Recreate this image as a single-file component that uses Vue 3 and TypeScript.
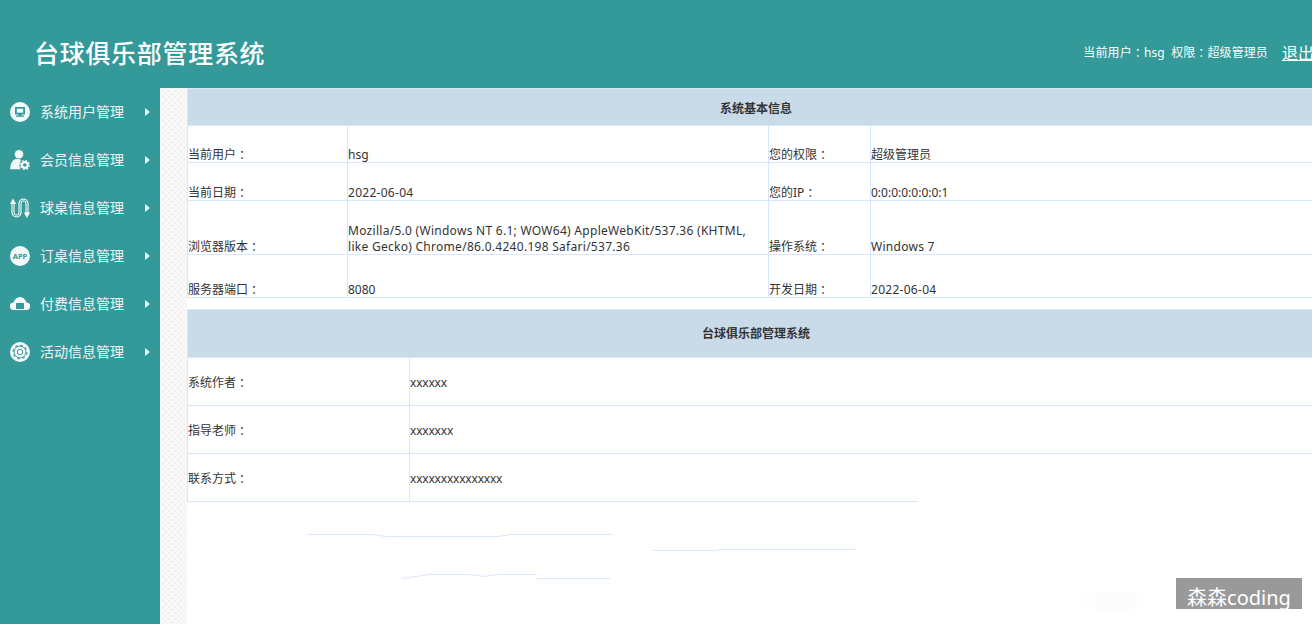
<template>
  <div class="page">
    <header class="top">
      <h1 class="title">台球俱乐部管理系统</h1>
      <div class="user-info">
        <span class="who">当前用户<span class="colon">：</span>hsg&nbsp;&nbsp;权限<span class="colon">：</span>超级管理员</span>
        <a class="logout">退出</a>
      </div>
    </header>
    <div class="body">
      <aside class="side">
        <div v-for="item in menus" :key="item.label" class="menu-item">
          <span class="menu-icon">
            <svg v-if="item.icon === 'screen'" viewBox="0 0 20 20" width="20" height="20">
              <circle cx="10" cy="10" r="10" fill="#f4f8f8" />
              <path d="M5 5h10v7.500H5z" fill="#339999" />
              <path d="M6.800 6.700h6.400v4H6.800z" fill="#f4f8f8" />
              <path d="M8.500 12h3v1.500h2.500v1.300H6v-1.300h2.500z" fill="#339999" />
            </svg>
            <svg v-else-if="item.icon === 'user'" viewBox="0 0 20 20" width="20" height="20">
              <circle cx="9" cy="4.300" r="4.300" fill="#f4f8f8" />
              <path d="M0 19.300c.4-5 2.200-9 4.500-9.800 2-.6 5-.6 7 .4-1.900 2-2.700 6-1 9.400z" fill="#f4f8f8" />
              <circle cx="14.800" cy="15" r="2.900" fill="none" stroke="#f4f8f8" stroke-width="2.200" />
              <circle cx="14.800" cy="15" r="4.400" fill="none" stroke="#f4f8f8" stroke-width="1.300" stroke-dasharray="1.800 1.650" />
            </svg>
            <svg v-else-if="item.icon === 'arrows'" viewBox="0 0 20 20" width="20" height="20">
              <path d="M3 4v10.500a3.500 3.500 0 0 0 7 0V5.500a3.500 3.500 0 0 1 7 0V16" fill="none" stroke="#f4f8f8" stroke-width="3.200" />
              <path d="M3 6v8.500a3.500 3.500 0 0 0 7 0V5.500a3.500 3.500 0 0 1 7 0V14" fill="none" stroke="#339999" stroke-width="0.900" />
              <path d="M-.2 6L3 .5 6.200 6zM13.800 14.500h6.400L17 20z" fill="#f4f8f8" />
            </svg>
            <svg v-else-if="item.icon === 'app'" viewBox="0 0 20 20" width="20" height="20">
              <circle cx="10" cy="10" r="10" fill="#f4f8f8" />
              <text x="10" y="12.700" text-anchor="middle" class="app-text">APP</text>
            </svg>
            <svg v-else-if="item.icon === 'cloud'" viewBox="0 0 20 20" width="20" height="20">
              <path d="M3.800 16a3.800 3.800 0 0 1-.4-7.600C4.600 5.200 7.200 3 10 3s5.400 2.200 6.600 5.400a3.800 3.800 0 0 1-.4 7.600z" fill="#f4f8f8" />
              <path d="M6 9h8v6H6z" fill="#339999" />
            </svg>
            <svg v-else viewBox="0 0 20 20" width="20" height="20">
              <circle cx="10" cy="10" r="10" fill="#f4f8f8" />
              <circle cx="10" cy="10" r="5.900" fill="none" stroke="#339999" stroke-width="0.900" />
              <circle cx="10" cy="10" r="6.800" fill="none" stroke="#339999" stroke-width="1.100" stroke-dasharray="2.700 2.640" />
              <circle cx="10" cy="10" r="2.700" fill="none" stroke="#339999" stroke-width="1" />
            </svg>
          </span>
          <span class="menu-label">{{ item.label }}</span>
          <span class="menu-arrow"></span>
        </div>
      </aside>
      <main class="main">
        <div class="content">
          <table class="info-table">
            <colgroup>
              <col style="width: 160px" />
              <col style="width: 421px" />
              <col style="width: 102px" />
              <col />
            </colgroup>
            <tbody>
              <tr class="head-row first"><th colspan="4">系统基本信息</th></tr>
              <tr v-for="row in infoRows" :key="row.a" :style="{ height: row.h + 'px' }">
                <td><div class="cell">{{ row.a }}<span class="colon">：</span></div></td>
                <td><div class="cell" :class="{ wide: row.wideB }">{{ row.b }}</div></td>
                <td><div class="cell">{{ row.c }}<span class="colon">：</span></div></td>
                <td><div class="cell" :class="{ wide: row.wideD }">{{ row.d }}</div></td>
              </tr>
            </tbody>
          </table>
          <table class="info-table second">
            <colgroup>
              <col style="width: 222px" />
              <col />
            </colgroup>
            <tbody>
              <tr class="head-row"><th colspan="2">台球俱乐部管理系统</th></tr>
              <tr v-for="row in aboutRows" :key="row.a" class="about-row">
                <td>{{ row.a }}<span class="colon">：</span></td>
                <td class="xs">{{ row.b }}</td>
              </tr>
            </tbody>
          </table>
          <div class="end-line"></div>
        </div>
      </main>
    </div>
    <svg class="traces" width="1312" height="624" viewBox="0 0 1312 624">
      <defs>
        <filter id="soft"><feGaussianBlur stdDeviation="9" /></filter>
      </defs>
      <ellipse cx="1115" cy="601" rx="26" ry="7" fill="#f7f7f7" filter="url(#soft)" />
      <path d="M307 534.500H373L386 536.500H498L510 534.500H613" class="trace" />
      <path d="M653 550.500H716L720 549.500H857" class="trace" />
      <path d="M402 578.500L430 574.500H470L484 576.500L497 574.500H537" class="trace" />
      <path d="M535 578.500H610" class="trace" />
    </svg>
    <div class="mark">森森coding</div>
  </div>
</template>

<script setup lang="ts">
const menus = [
  { label: '系统用户管理', icon: 'screen' },
  { label: '会员信息管理', icon: 'user' },
  { label: '球桌信息管理', icon: 'arrows' },
  { label: '订桌信息管理', icon: 'app' },
  { label: '付费信息管理', icon: 'cloud' },
  { label: '活动信息管理', icon: 'gear' },
]

const infoRows = [
  { a: '当前用户', b: 'hsg', c: '您的权限', d: '超级管理员', h: 37 },
  { a: '当前日期', b: '2022-06-04', c: '您的IP', d: '0:0:0:0:0:0:0:1', h: 38, wideB: true },
  {
    a: '浏览器版本',
    b: 'Mozilla/5.0 (Windows NT 6.1; WOW64) AppleWebKit/537.36 (KHTML, like Gecko) Chrome/86.0.4240.198 Safari/537.36',
    c: '操作系统',
    d: 'Windows 7',
    h: 54,
    wideB: true,
    wideD: true,
  },
  { a: '服务器端口', b: '8080', c: '开发日期', d: '2022-06-04', h: 43, wideD: true },
]

const aboutRows = [
  { a: '系统作者', b: 'xxxxxx' },
  { a: '指导老师', b: 'xxxxxxx' },
  { a: '联系方式', b: 'xxxxxxxxxxxxxxx' },
]
</script>

<style>
html,
body {
  margin: 0;
  overflow: hidden;
}
</style>

<style scoped>
.page {
  position: relative;
  width: 1312px;
  height: 624px;
  overflow: hidden;
  display: flex;
  flex-direction: column;
  font-family: 'Noto Sans', 'Noto Sans CJK SC', sans-serif;
  font-size: 12px;
  color: #333;
  background: #fff;
}

.colon {
  font-family: 'Noto Sans CJK TC', sans-serif;
  line-height: 1;
  vertical-align: -1px;
}

.top {
  flex: none;
  height: 88px;
  background: #339999;
  color: #fff;
  display: flex;
  align-items: center;
  justify-content: space-between;
  padding: 20px 0 0 34px;
  box-sizing: border-box;
}

.title {
  margin: 0 0 4px;
  font-family: 'Noto Sans CJK SC', sans-serif;
  font-size: 25px;
  font-weight: 500;
  letter-spacing: 0.7px;
}

.user-info {
  display: flex;
  align-items: center;
  gap: 14px;
  margin: 0 -2px 5px 0;
  font-size: 12px;
}

.who {
  letter-spacing: 0.1px;
}

.logout {
  font-size: 16px;
  text-decoration: underline;
}

.body {
  flex: 1;
  display: flex;
  min-height: 0;
}

.side {
  flex: none;
  width: 160px;
  background: #339999;
}

.menu-item {
  height: 48px;
  display: flex;
  align-items: center;
  padding-left: 10px;
  color: #eef6f6;
  font-size: 14px;
}

.menu-icon {
  width: 20px;
  height: 20px;
  display: block;
}

.menu-label {
  margin-left: 10px;
  width: 105px;
  padding-bottom: 2px;
}

.menu-arrow {
  width: 0;
  height: 0;
  border-left: 5px solid #eef6f6;
  border-top: 4px solid transparent;
  border-bottom: 4px solid transparent;
}

.app-text {
  font-family: 'Noto Sans', sans-serif;
  font-size: 7.500px;
  font-weight: 700;
  fill: #339999;
}

.main {
  flex: 1;
  min-width: 0;
  padding-left: 27px;
  background-color: #f9f9f9;
  background-image: radial-gradient(circle, #efefef 1px, transparent 1.2px), radial-gradient(circle, #efefef 1px, transparent 1.2px);
  background-size: 6px 6px;
  background-position: 0 0, 3px 3px;
}

.content {
  width: 1138px;
  height: 100%;
  background: #fff;
}

.info-table {
  width: 100%;
  table-layout: fixed;
  border-collapse: collapse;
  line-height: 16px;
}

.info-table th,
.info-table td {
  padding: 0;
  border: 1px solid #d7e6fa;
}

.info-table td {
  vertical-align: bottom;
}

.cell {
  margin-bottom: -1px;
}

.wide {
  letter-spacing: 0.28px;
}

.xs {
  letter-spacing: -0.2px;
}

.head-row {
  height: 48px;
  background: #c9dae9;
}

.head-row.first {
  height: 37px;
}

.head-row.first th {
  padding-top: 3px;
}

.head-row th {
  font-size: 12px;
  font-weight: 700;
  color: #333;
}

.second {
  margin-top: 11px;
}

.about-row {
  height: 48px;
}

.info-table .about-row td {
  vertical-align: middle;
  padding-top: 2px;
}

.about-row:last-child td {
  border-bottom: none;
}

.end-line {
  width: 731px;
  height: 1px;
  margin-top: -1px;
  background: #d7e6fa;
}

.traces {
  position: absolute;
  left: 0;
  top: 0;
  pointer-events: none;
}

.trace {
  fill: none;
  stroke: #dbe8fb;
  stroke-width: 1;
}

.mark {
  position: absolute;
  left: 1176px;
  top: 578px;
  width: 126px;
  height: 31px;
  overflow: hidden;
  background: #999;
  color: #fff;
  font-size: 20px;
  line-height: 40px;
  text-align: center;
}
</style>
